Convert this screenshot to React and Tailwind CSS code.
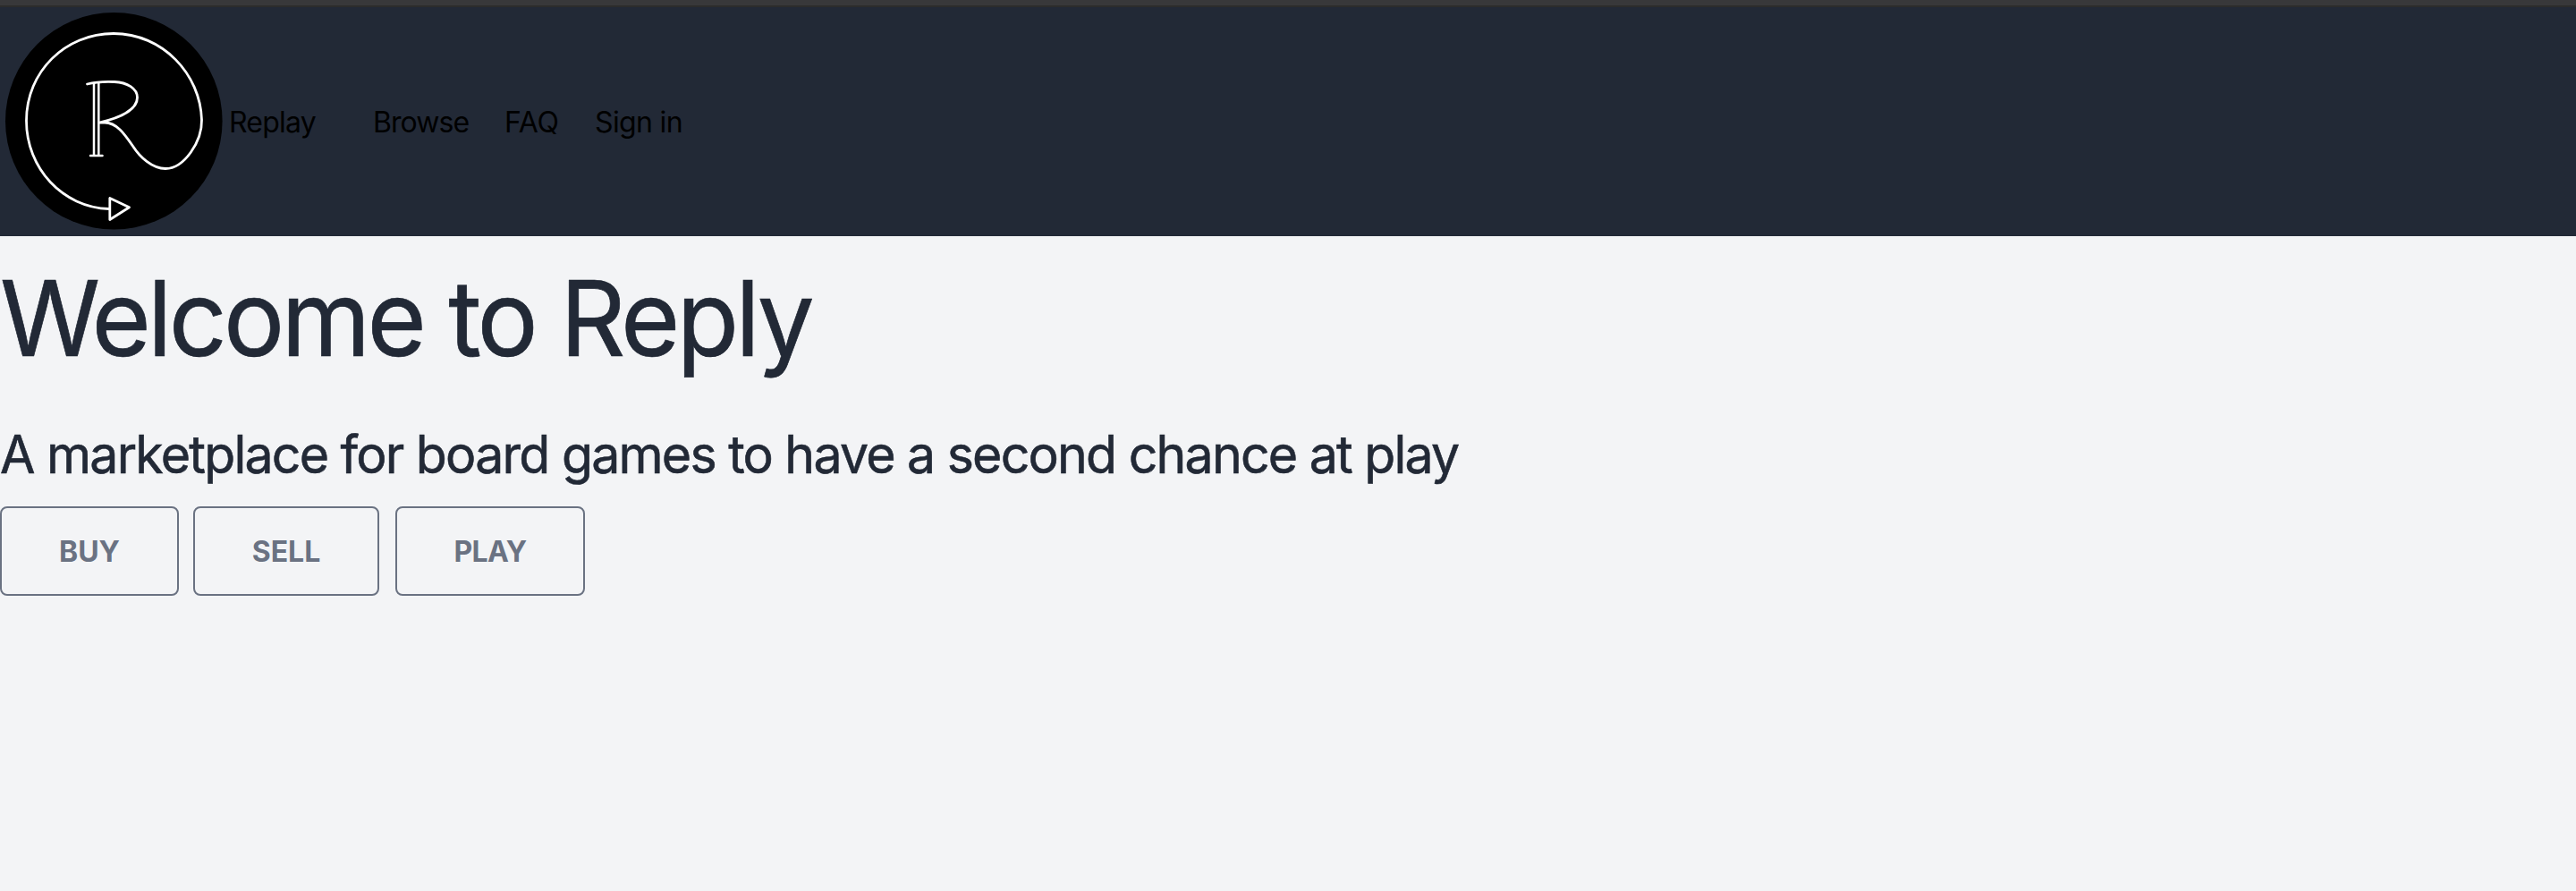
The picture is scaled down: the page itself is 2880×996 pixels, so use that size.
const NAV_LINKS = [
  { label: "Browse", className: "w-[147px] tracking-[-0.95px]" },
  { label: "FAQ", className: "w-[101px] tracking-[-0.2px]" },
  { label: "Sign in", className: "w-[110px] tracking-[-0.65px]" },
];

const ACTIONS = [
  { label: "BUY", className: "w-[200px] mr-4" },
  { label: "SELL", className: "w-[208px] mr-[18px]" },
  { label: "PLAY", className: "w-[212px] tracking-[-0.6px]" },
];

function Logo() {
  return (
    <svg
      className="block size-[256px] shrink-0"
      viewBox="0 8 256 256"
      fill="none"
      stroke="#fff"
      strokeWidth="2.8"
      strokeLinecap="round"
      strokeLinejoin="round"
    >
      <circle cx="127.3" cy="135.3" r="121.3" fill="#000" stroke="none" />
      <path d="M122 233.5C70 232 29.5 188 29.5 135C29.5 80 73 37.5 127 37.5C182 37.5 224 83 225.5 134C226 158 206 188.5 185 188.5C170 188.5 156 175 149 164C140 151 131 137 117 137L111 137C133 132 153.5 123 153.5 109C153.5 99 142 92 128 91.5C117 91 107 91.5 97.5 94" />
      <path d="M105 93V173M110.3 92.5V173M101 174H114.5" strokeWidth="2.5" />
      <path d="M122.8 221.5V245.5L144.5 231.8Z" />
    </svg>
  );
}

export default function App() {
  return (
    <div className="flex h-[996px] w-full flex-col overflow-hidden bg-gray-100 font-['Inter','Liberation_Sans',sans-serif] text-[#222936]">
      <div className="h-2 shrink-0 border-b-2 border-[#2c2c2c] bg-[#38383a]" />
      <header className="flex h-64 shrink-0 items-center bg-[#222936] text-[32px] leading-[48px] text-black">
        <Logo />
        <a className="block w-[161px] shrink-0 pt-0.5 tracking-[-0.8px]">Replay</a>
        <nav className="flex pt-0.5">
          {NAV_LINKS.map((link) => (
            <a key={link.label} className={`block shrink-0 whitespace-nowrap ${link.className}`}>
              {link.label}
            </a>
          ))}
        </nav>
      </header>
      <main>
        <h1 className="mt-[31px] h-[121px] origin-left scale-x-[0.97] whitespace-nowrap text-[117.3px] leading-[120px] tracking-[-3.9px] [-webkit-text-stroke:0.7px]">
          Welcome to Reply
        </h1>
        <h2 className="mt-[55px] h-[72px] origin-left scale-x-[0.97] whitespace-nowrap text-[59px] leading-[73px] tracking-[-1.85px] [-webkit-text-stroke:0.6px]">
          A marketplace for board games to have a second chance at play
        </h2>
        <div className="mt-[23px] flex">
          {ACTIONS.map((action) => (
            <button
              key={action.label}
              className={`flex h-[100px] items-center justify-center rounded-lg border-2 border-gray-500 pt-0.5 text-[32px] font-bold text-gray-500 ${action.className}`}
            >
              {action.label}
            </button>
          ))}
        </div>
      </main>
    </div>
  );
}
